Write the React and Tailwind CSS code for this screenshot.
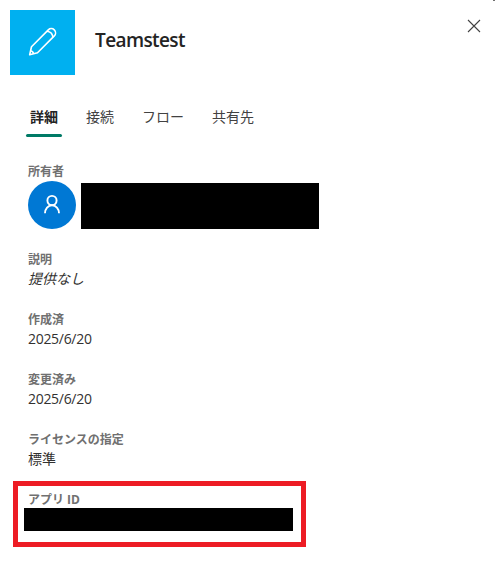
const FONT = "font-['Open_Sans','Noto_Sans_CJK_JP',sans-serif]";

const TABS = ['詳細', '接続', 'フロー', '共有先'];

function Field({ label, children }) {
  return (
    <div>
      <dt className="h-5 pt-px text-[12px] leading-5 font-bold text-[#707070]">{label}</dt>
      <dd>{children}</dd>
    </div>
  );
}

function Value({ children, className = '' }) {
  return <div className={`h-5 text-[14px] leading-5 text-[#323130] ${className}`}>{children}</div>;
}

function PencilIcon() {
  return (
    <svg className="size-[65px]" viewBox="0 0 65 65" fill="none" stroke="white" strokeWidth="1.6" strokeLinejoin="round">
      <path d="M19.7 44.7 21.5 36.7 38.3 19.9a4.2 4.2 0 0 1 6 6L27.5 42.7Z" />
      <path d="M20.5 40.8c1.6.2 2.8 1.4 3 3M36.9 21.3c3.2.3 5.7 2.8 6 6" />
    </svg>
  );
}

export default function App() {
  return (
    <main className={`${FONT} relative h-[569px] w-[495px] overflow-hidden bg-white text-[#242424]`}>
      <span className="absolute top-0 right-0 h-px w-[2px] bg-[#707070]" />
      <header className="flex h-[75px] items-start pt-[10px] pl-[10px]">
        <div className="size-[65px] shrink-0 bg-[#00b0f0]">
          <PencilIcon />
        </div>
        <h1 className="mt-4 ml-5 flex-1 text-[19px] leading-7 font-semibold tracking-[-0.6px]">
          Teamstest
        </h1>
        <button aria-label="閉じる" className="mt-[9px] mr-[14px] size-[14px]">
          <svg className="size-[14px]" viewBox="0 0 14 14" stroke="#424242" strokeWidth="1.1">
            <path d="m1 1 12 12M13 1 1 13" />
          </svg>
        </button>
      </header>

      <nav className="mt-[22px] ml-[26px] flex h-10 gap-5">
        {TABS.map((tab, i) => (
          <button
            key={tab}
            className={`flex h-10 flex-col items-stretch pt-[10px] text-[14px] leading-5 ${i === 0 ? 'font-bold' : 'text-[#424242]'}`}
          >
            <span className="px-1">{tab}</span>
            {i === 0 && <span className="mt-[7px] h-[3px] rounded-full bg-[#007a66]" />}
          </button>
        ))}
      </nav>

      <dl className="mt-6 ml-7 flex flex-col gap-5">
        <Field label="所有者">
          <div className="flex h-12">
            <span className="size-12 rounded-full bg-[#0078d4]">
              <svg className="size-12" viewBox="0 0 48 48" fill="none" stroke="white" strokeWidth="1.9">
                <circle cx="24" cy="19.5" r="4.6" />
                <path d="M17 32.2a7 8 0 0 1 14 0" />
              </svg>
            </span>
            <span className="mt-[2px] ml-[5px] h-[46px] w-[238px] bg-black" />
          </div>
        </Field>
        <Field label="説明">
          <Value className="italic">提供なし</Value>
        </Field>
        <Field label="作成済">
          <Value className="tracking-[-0.3px]">2025/6/20</Value>
        </Field>
        <Field label="変更済み">
          <Value className="tracking-[-0.3px]">2025/6/20</Value>
        </Field>
        <Field label="ライセンスの指定">
          <Value>標準</Value>
        </Field>
        <div className="relative">
          <Field label="アプリ ID">
            <div className="mt-[-1px] -ml-1 h-[23px] w-[269px] bg-black" />
          </Field>
          <div className="absolute -top-2 -left-[15px] h-[66px] w-[293px] border-5 border-[#ed1c24]" />
        </div>
      </dl>
    </main>
  );
}
